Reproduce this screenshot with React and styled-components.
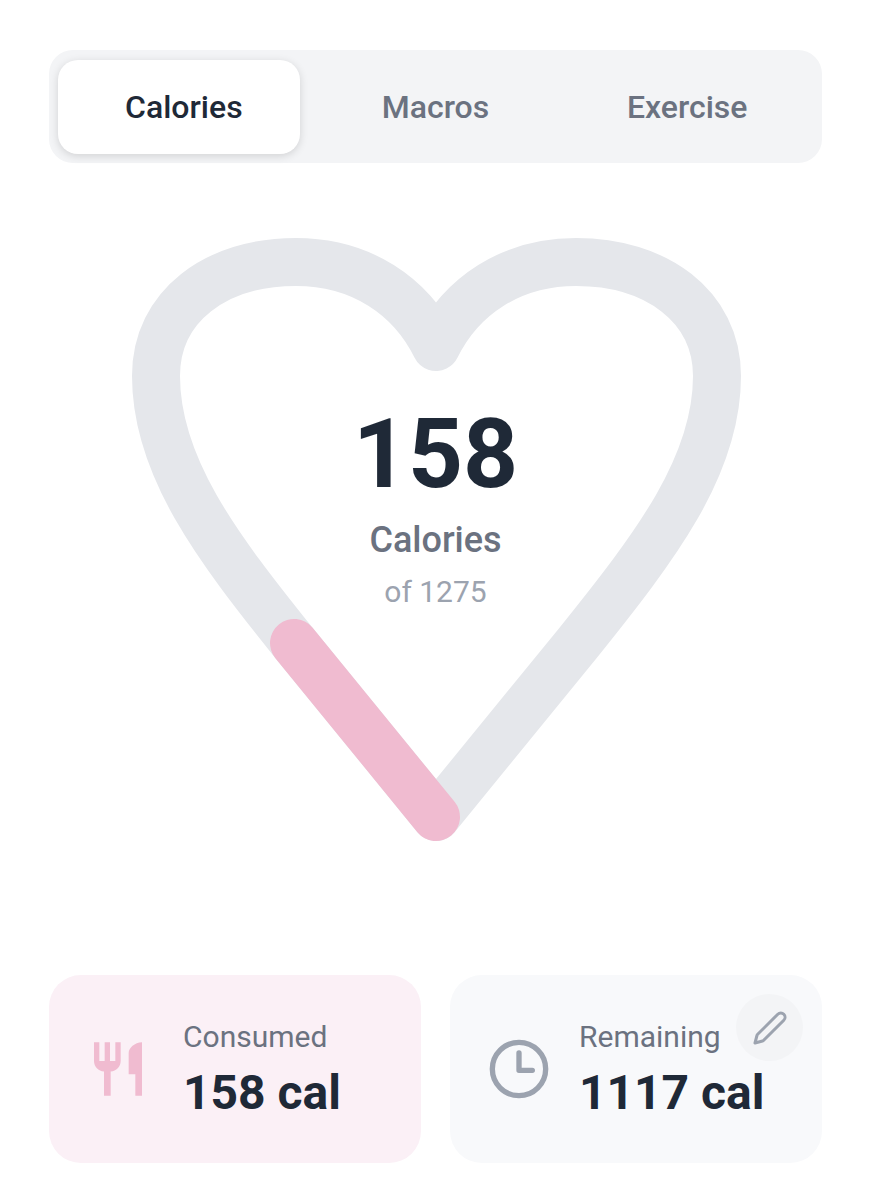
import React from "react";
import styled, { createGlobalStyle } from "styled-components";

const GlobalStyle = createGlobalStyle`
  html, body {
    margin: 0;
    background: #ffffff;
  }
  body {
    font-family: Roboto, "Liberation Sans", sans-serif;
    color: #1f2937;
  }
`;

const Page = styled.div`
  width: 871px;
  height: 1200px;
  box-sizing: border-box;
  padding: 50px 49px 0;
  display: flex;
  flex-direction: column;
  overflow: hidden;
`;

const TabBar = styled.div`
  display: flex;
  height: 113px;
  box-sizing: border-box;
  padding: 10px 9px 9px;
  border-radius: 24px;
  background: #f3f4f6;
`;

const Tab = styled.div`
  position: relative;
  flex: 1;
  display: flex;
  align-items: center;
  justify-content: center;
  font-size: 32px;
  font-weight: 500;
  color: ${(p) => (p.$active ? "#1f2937" : "#6b7280")};

  &::before {
    content: "";
    display: ${(p) => (p.$active ? "block" : "none")};
    position: absolute;
    top: 0;
    bottom: 0;
    left: 0;
    width: 242px;
    border-radius: 20px;
    background: #ffffff;
    box-shadow: 0 2px 8px rgba(0, 0, 0, 0.14);
  }

  span {
    position: relative;
  }
`;

const HeartStage = styled.div`
  display: grid;
  justify-items: center;
  margin-top: 69px;
  height: 604px;
`;

const HeartSvg = styled.svg`
  grid-area: 1 / 1;
  display: block;
`;

const Readout = styled.div`
  grid-area: 1 / 1;
  display: flex;
  flex-direction: column;
  align-items: center;
  padding-top: 166px;
`;

const BigNumber = styled.div`
  font-size: 96px;
  line-height: 112px;
  font-weight: 700;
  color: #1f2937;
`;

const ReadoutLabel = styled.div`
  margin-top: 8px;
  font-size: 36px;
  line-height: 44px;
  font-weight: 500;
  color: #6b7280;
`;

const ReadoutSub = styled.div`
  margin-top: 12px;
  font-size: 30px;
  line-height: 36px;
  color: #9ca3af;
`;

const Cards = styled.div`
  display: grid;
  grid-template-columns: 372px 372px;
  column-gap: 29px;
  margin-top: 139px;
`;

const Card = styled.div`
  position: relative;
  height: 188px;
  box-sizing: border-box;
  padding-left: 37px;
  border-radius: 32px;
  display: flex;
  align-items: center;
  gap: ${(p) => p.$gap}px;
  background: ${(p) => p.$bg};
`;

const IconSvg = styled.svg`
  flex: none;
  display: block;
`;

const CardText = styled.div`
  display: flex;
  flex-direction: column;
`;

const CardLabel = styled.div`
  font-size: 30px;
  line-height: 40px;
  color: #6b7280;
`;

const CardValue = styled.div`
  margin-top: 8px;
  font-size: 48px;
  line-height: 56px;
  font-weight: 700;
  color: #1f2937;
`;

const EditButton = styled.div`
  position: absolute;
  top: 19px;
  right: 19px;
  width: 67px;
  height: 67px;
  border-radius: 50%;
  background: #f3f4f6;
  display: flex;
  align-items: center;
  justify-content: center;
`;

const HEART =
  "M435 811 L293 637 C215 540 155 460 155 370 C155 300 215 256 295 256 C360 256 410 290 435 341 C460 290 510 256 575 256 C655 256 716 300 716 370 C716 460 655 540 577 637 Z";

const ForkKnife = () => (
  <IconSvg width="64" height="64" viewBox="0 0 24 24" fill="#f0bbd0">
    <path d="M11 9H9V2H7v7H5V2H3v7c0 2.12 1.66 3.84 3.75 3.97V22h2.5v-9.03C11.34 12.84 13 11.12 13 9V2h-2v7zm5-3v8h2.5v8H21V2c-2.76 0-5 2.24-5 4z" />
  </IconSvg>
);

const Clock = () => (
  <IconSvg width="64" height="64" viewBox="0 0 24 24" fill="none" stroke="#9ca3af" strokeWidth="2" strokeLinecap="round" strokeLinejoin="round">
    <circle cx="12" cy="12" r="10" />
    <path d="M12 6v6.5h5" />
  </IconSvg>
);

const Pencil = () => (
  <svg width="36" height="36" viewBox="0 0 24 24" fill="none" stroke="#9ca3af" strokeWidth="2" strokeLinecap="round" strokeLinejoin="round">
    <path d="M21.2 6.8a2.8 2.8 0 0 0-4-4L3.8 16.2a2 2 0 0 0-.5.8L2 22l5-1.3a2 2 0 0 0 .8-.5z" />
  </svg>
);

export default function App() {
  return (
    <Page>
      <GlobalStyle />
      <TabBar>
        <Tab $active><span>Calories</span></Tab>
        <Tab><span>Macros</span></Tab>
        <Tab><span>Exercise</span></Tab>
      </TabBar>
      <HeartStage>
        <HeartSvg width="620" height="620" viewBox="125 226 620 620" fill="none" strokeWidth="48" strokeLinecap="round" strokeLinejoin="round">
          <path d={HEART} stroke="#e5e7eb" />
          <path d="M293 637 L435 811" stroke="#f0bbd0" />
        </HeartSvg>
        <Readout>
          <BigNumber>158</BigNumber>
          <ReadoutLabel>Calories</ReadoutLabel>
          <ReadoutSub>of 1275</ReadoutSub>
        </Readout>
      </HeartStage>
      <Cards>
        <Card $bg="#fbf0f6" $gap={33}>
          <ForkKnife />
          <CardText>
            <CardLabel>Consumed</CardLabel>
            <CardValue>158 cal</CardValue>
          </CardText>
        </Card>
        <Card $bg="#f8f9fb" $gap={28}>
          <Clock />
          <CardText>
            <CardLabel>Remaining</CardLabel>
            <CardValue>1117 cal</CardValue>
          </CardText>
          <EditButton><Pencil /></EditButton>
        </Card>
      </Cards>
    </Page>
  );
}
